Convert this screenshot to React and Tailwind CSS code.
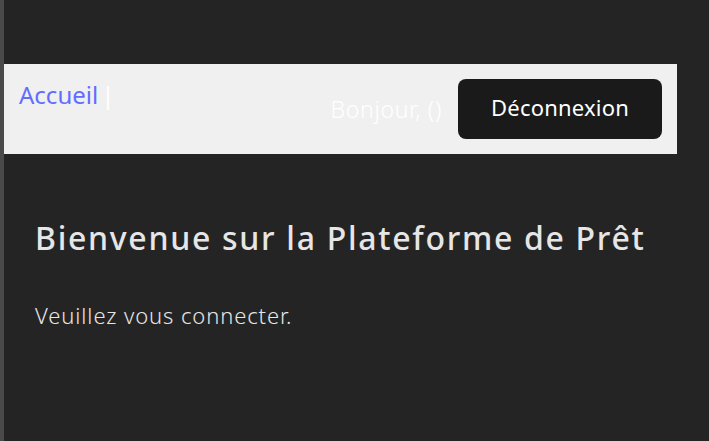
import React from "react";

const App = () => {
  const user = { name: "", role: "" };

  return (
    <div className="min-h-screen bg-[#242424] border-l-4 border-[#4a4a4a] font-['Noto_Sans',sans-serif] text-[rgba(255,255,255,0.87)]">
      <div className="w-[673px] pt-16">
        {/* Barre de navigation */}
        <nav className="flex justify-between items-start bg-[#f0f0f0] p-[15px]">
          <div className="text-[24px] leading-[30px] pt-[1px]">
            <a href="#" className="text-[#646cff]">
              Accueil
            </a>
            <span className="text-white ml-[3px]">|</span>
          </div>
          <div className="flex items-center gap-4 self-center">
            <span className="text-white text-[23px] tracking-[0.7px] font-light">
              Bonjour, {user.name}({user.role})
            </span>
            <button className="h-[60px] w-[204px] pb-[3px] rounded-lg bg-[#1a1a1a] text-white text-[22px] tracking-[0.2px]">
              Déconnexion
            </button>
          </div>
        </nav>

        {/* Contenu */}
        <main className="px-[31px] pt-[65px]">
          <h1 className="whitespace-nowrap text-[32px] leading-[38px] tracking-[1.7px] font-medium text-[#e6e6e6]">
            Bienvenue sur la Plateforme de Prêt
          </h1>
          <p className="mt-[42px] text-[22px] leading-[33px] tracking-[0.9px] font-light text-[#e6e6e6]">
            Veuillez vous connecter.
          </p>
        </main>
      </div>
    </div>
  );
};

export default App;
